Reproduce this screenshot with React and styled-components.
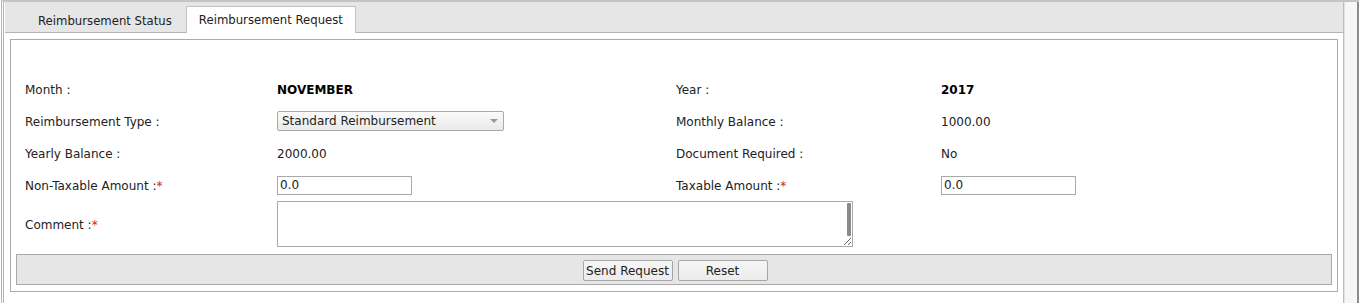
import React from 'react';
import styled, { createGlobalStyle } from 'styled-components';

const Global = createGlobalStyle`
  html, body { margin: 0; padding: 0; background: #fff; }
  body { font-family: "DejaVu Sans", Verdana, sans-serif; font-size: 12px; color: #222; }
`;

const Frame = styled.div`
  display: flex;
  height: 303px;
  margin-left: 1px;
  border-left: 3px double #b4b4b4;
  border-top: 2px solid #c4c4c4;
  box-sizing: border-box;
`;

const TabPanel = styled.div`
  flex: 1;
  display: flex;
  flex-direction: column;
  border-right: 1px solid #bdbdbd;
  margin-left: 1px;
`;

const ScrollStrip = styled.div`
  width: 12px;
  background: #f6f6f6;
  border-left: 1px solid #e2e2e2;
  border-right: 2px solid #8c8c8c;
`;

const TabBar = styled.div`
  display: flex;
  align-items: flex-end;
  height: 31px;
  padding-top: 1px;
  padding-left: 20px;
  background: #e6e6e6;
  border-bottom: 1px solid #b5b5b5;
  box-sizing: border-box;
`;

const Tab = styled.div`
  display: flex;
  align-items: center;
  padding: 0 12px;
  box-sizing: border-box;
  font-size: 11.7px;
  margin-bottom: -1px;
  margin-left: ${p => (p.$active ? '1px' : '0')};
  background: ${p => (p.$active ? '#fff' : 'transparent')};
  border: 1px solid ${p => (p.$active ? '#c2c2c2' : 'transparent')};
  border-bottom: none;
  height: ${p => (p.$active ? '27px' : '26px')};
  color: #222;
`;

const Content = styled.div`
  padding: 6px 5px 11px 5px;
  flex: 1;
  display: flex;
  flex-direction: column;
`;

const Box = styled.div`
  flex: 1;
  border: 1px solid #ababab;
  padding: 33px 5px 5px 5px;
  display: flex;
  flex-direction: column;
`;

const FormGrid = styled.div`
  display: grid;
  grid-template-columns: 252px 399px 265px 1fr;
  grid-template-rows: repeat(4, 32px) 46px;
  align-items: center;
  padding-left: 9px;
`;

const Label = styled.div`
  color: #222;
  padding-top: 2px;
`;

const Star = styled.span`
  color: #d42020;
`;

const Value = styled.div`
  padding-top: 2px;
  font-weight: ${p => (p.$bold ? 'bold' : 'normal')};
  color: ${p => (p.$bold ? '#000' : '#222')};
`;

const SelectWrap = styled.div`
  position: relative;
  width: 227px;
  height: 20px;
`;

const Select = styled.select`
  appearance: none;
  width: 100%;
  height: 20px;
  margin: 0;
  padding: 0 0 0 4px;
  font: inherit;
  color: #222;
  border: 1px solid #a9a9a9;
  border-radius: 2px;
  background: linear-gradient(#fbfbfb, #e9e9e9);
  outline: none;
`;

const Arrow = styled.span`
  position: absolute;
  right: 6px;
  top: 8px;
  width: 0;
  height: 0;
  border-left: 4px solid transparent;
  border-right: 4px solid transparent;
  border-top: 4px solid #999;
  pointer-events: none;
`;

const TextInput = styled.input`
  width: 135px;
  height: 19px;
  box-sizing: border-box;
  margin: 0;
  padding: 0 2px;
  font: inherit;
  color: #222;
  border: 1px solid #a9a9a9;
  outline: none;
`;

const CommentCell = styled.div`
  grid-column: 2 / 5;
  position: relative;
  width: 576px;
  height: 46px;
`;

const TextArea = styled.textarea`
  display: block;
  width: 576px;
  height: 46px;
  box-sizing: border-box;
  margin: 0;
  padding: 2px;
  font: inherit;
  border: 1px solid #a9a9a9;
  resize: both;
  outline: none;
  overflow: hidden;
`;

const Thumb = styled.span`
  position: absolute;
  right: 2px;
  top: 2px;
  width: 4px;
  height: 33px;
  background: #8a8a8a;
  border-radius: 1px;
`;

const ButtonBar = styled.div`
  margin-top: 7px;
  height: 31px;
  box-sizing: border-box;
  background: #e6e6e6;
  border: 1px solid #a9a9a9;
  display: flex;
  justify-content: center;
  align-items: flex-start;
  padding-top: 5px;
  gap: 5px;
  padding-left: 2px;
`;

const Button = styled.button`
  width: 90px;
  height: 21px;
  margin: 0;
  padding: 0;
  font: inherit;
  font-size: 12px;
  color: #222;
  border: 1px solid #a6a6a6;
  border-radius: 2px;
  background: linear-gradient(#f6f6f6, #ececec);
`;

export default function App() {
  return (
    <>
      <Global />
      <Frame>
        <TabPanel>
          <TabBar>
            <Tab>Reimbursement Status</Tab>
            <Tab $active>Reimbursement Request</Tab>
          </TabBar>
          <Content>
            <Box>
              <FormGrid>
                <Label>Month :</Label>
                <Value $bold>NOVEMBER</Value>
                <Label>Year :</Label>
                <Value $bold>2017</Value>

                <Label>Reimbursement Type :</Label>
                <div>
                  <SelectWrap>
                    <Select defaultValue="std">
                      <option value="std">Standard Reimbursement</option>
                    </Select>
                    <Arrow />
                  </SelectWrap>
                </div>
                <Label>Monthly Balance :</Label>
                <Value>1000.00</Value>

                <Label>Yearly Balance :</Label>
                <Value>2000.00</Value>
                <Label>Document Required :</Label>
                <Value>No</Value>

                <Label>Non-Taxable Amount :<Star>*</Star></Label>
                <div><TextInput defaultValue="0.0" /></div>
                <Label>Taxable Amount :<Star>*</Star></Label>
                <div><TextInput defaultValue="0.0" /></div>

                <Label>Comment :<Star>*</Star></Label>
                <CommentCell>
                  <TextArea />
                  <Thumb />
                </CommentCell>
              </FormGrid>
              <ButtonBar>
                <Button>Send Request</Button>
                <Button>Reset</Button>
              </ButtonBar>
            </Box>
          </Content>
        </TabPanel>
        <ScrollStrip />
      </Frame>
    </>
  );
}
